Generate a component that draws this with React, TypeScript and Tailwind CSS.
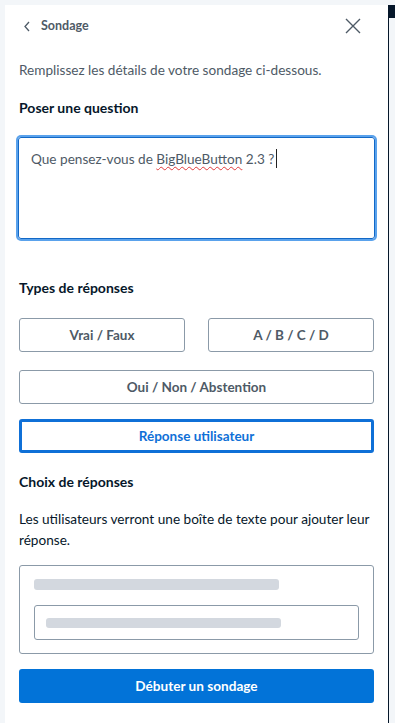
import React from "react"

const font = { fontFamily: "Lato, 'Noto Sans', sans-serif" }

const TypeButton = ({ label, active = false, className = "" }: { label: string; active?: boolean; className?: string }) => (
  <button
    className={
      active
        ? `h-[34px] rounded-[3px] border-[3px] border-[#0f70d7] bg-white text-[13.5px] font-bold text-[#0f70d7] ${className}`
        : `h-[34px] rounded-[3px] border border-[#8b9aa8] bg-white text-[13.5px] font-bold text-[#4e5a66] ${className}`
    }
  >
    {label}
  </button>
)

export default function App() {
  return (
    <div className="flex h-[723px] w-[395px] bg-[#f3f6f9] pl-[5px] pt-[5px]" style={font}>
      <div className="flex w-[383px] flex-col bg-white px-[14px]">
        {/* header */}
        <div className="flex h-[40px] items-center justify-between pt-[2px]">
          <div className="flex items-center pl-[4px]">
            <svg width="8" height="11" viewBox="0 0 8 11" fill="none" stroke="#4e5a66" strokeWidth="1.3">
              <path d="M6 1 L2 5.5 L6 10" />
            </svg>
            <span className="ml-[10px] text-[12.5px] font-bold text-[#4e5a66]">Sondage</span>
          </div>
          <svg width="16" height="16" viewBox="0 0 16 16" stroke="#4e5a66" strokeWidth="1.4" className="mr-[13px]">
            <path d="M1 1 L15 15 M15 1 L1 15" />
          </svg>
        </div>

        <p className="mt-[15px] text-[13.6px] leading-[20px] text-[#4e5a66]">
          Remplissez les détails de votre sondage ci-dessous.
        </p>
        <h2 className="mt-[18px] text-[14px] font-bold leading-[20px] text-[#06172a]">Poser une question</h2>

        <div className="-mx-[1px] mt-[19px] h-[102px] rounded-[3px] border border-[#1268c6] px-[12px] py-[7px] shadow-[0_0_0_2px_#5aa2ec]">
          <span className="text-[13.6px] leading-[20px] text-[#4e5a66]">
            Que pensez-vous de{" "}
            <span className="underline decoration-[#e03a3a] decoration-wavy decoration-1 underline-offset-2">BigBlueButton</span>{" "}
            2.3 ?
          </span>
          <span className="ml-[2px] inline-block h-[19px] w-px translate-y-[4px] bg-[#222]" />
        </div>

        <h2 className="mt-[39px] text-[14px] font-bold leading-[20px] text-[#06172a]">Types de réponses</h2>
        <div className="mt-[20px] grid grid-cols-2 gap-x-[23px]">
          <TypeButton label="Vrai / Faux" />
          <TypeButton label="A / B / C / D" />
        </div>
        <TypeButton label="Oui / Non / Abstention" className="mt-[18px] w-full" />
        <TypeButton label="Réponse utilisateur" active className="mt-[15px] w-full" />

        <h2 className="mt-[19px] text-[14px] font-bold leading-[20px] text-[#06172a]">Choix de réponses</h2>
        <p className="mt-[17px] text-[13.6px] leading-[21px] text-[#06172a]">
          Les utilisateurs verront une boîte de texte pour ajouter leur réponse.
        </p>

        <div className="mt-[14px] flex h-[89px] flex-col rounded-[3px] border border-[#8b9aa8] px-[14px] pt-[13px]">
          <div className="h-[11px] w-[245px] rounded-[3px] bg-[#d3d8df]" />
          <div className="mt-[15px] flex h-[35px] items-center rounded-[3px] border border-[#8b9aa8] px-[11px]">
            <div className="h-[10px] w-[235px] rounded-[3px] bg-[#d3d8df]" />
          </div>
        </div>

        <button className="mt-[15px] h-[34px] w-full rounded-[3px] bg-[#0273d8] text-[13.6px] font-bold text-white">
          Débuter un sondage
        </button>
      </div>
      <div className="flex w-[7px] flex-col border-l border-[#06172a]">
        <div className="h-[13px] bg-[#06172a]" />
      </div>
    </div>
  )
}
